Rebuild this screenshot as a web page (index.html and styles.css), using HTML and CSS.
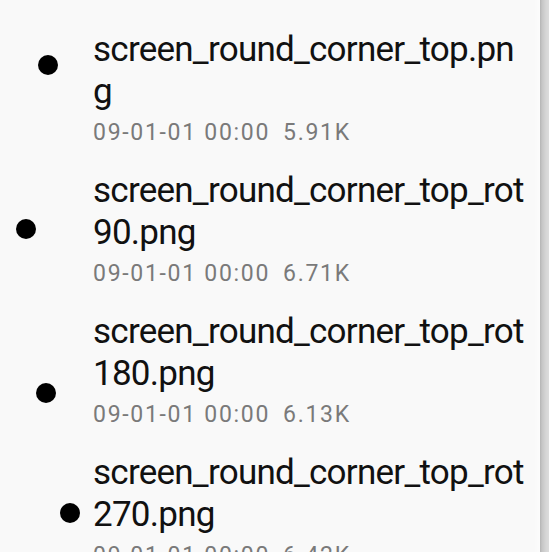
FILE: index.html
```html
<!DOCTYPE html>
<html lang="en">
<head>
<meta charset="utf-8">
<title>Files</title>
<link rel="stylesheet" href="styles.css">
</head>
<body>
<div class="screen">
  <main class="list">
    <div class="row">
      <span class="dot dot-1"></span>
      <div class="info">
        <div class="name">screen_round_corner_top.png</div>
        <div class="meta"><span class="date">09-01-01 00:00</span><span class="size">5.91K</span></div>
      </div>
    </div>
    <div class="row">
      <span class="dot dot-2"></span>
      <div class="info">
        <div class="name">screen_round_corner_top_rot90.png</div>
        <div class="meta"><span class="date">09-01-01 00:00</span><span class="size">6.71K</span></div>
      </div>
    </div>
    <div class="row">
      <span class="dot dot-3"></span>
      <div class="info">
        <div class="name">screen_round_corner_top_rot180.png</div>
        <div class="meta"><span class="date">09-01-01 00:00</span><span class="size">6.13K</span></div>
      </div>
    </div>
    <div class="row">
      <span class="dot dot-4"></span>
      <div class="info">
        <div class="name">screen_round_corner_top_rot270.png</div>
        <div class="meta"><span class="date">09-01-01 00:00</span><span class="size">6.42K</span></div>
      </div>
    </div>
  </main>
  <div class="edge"></div>
</div>
</body>
</html>
```
FILE: styles.css
```css
html, body {
  margin: 0;
  padding: 0;
  height: 100%;
  overflow: hidden;
}
body {
  background: #f9f9f9;
  font-family: Roboto, "Liberation Sans", sans-serif;
}
.screen {
  display: flex;
  height: 552px;
}
.list {
  flex: 1;
  padding-top: 18px;
  background: linear-gradient(to right, #f9f9f9 0, #f9f9f9 calc(100% - 6px), #fcfcfc 100%);
}
.edge {
  width: 9px;
  flex: none;
  background: linear-gradient(to right, #b4b4b4 0, #c6c6c6 2px, #d6d6d6 6px, #dcdcdc 100%);
}
.row {
  position: relative;
  display: flex;
  padding: 11px 0 11.5px 93px;
}
.dot {
  position: absolute;
  width: 20px;
  height: 20px;
  border-radius: 50%;
  background: #000;
}
.dot-1 { left: 37.5px; top: 37px; }
.dot-2 { left: 16px; top: 59.5px; }
.dot-3 { left: 36px; top: 83px; }
.dot-4 { left: 60px; top: 62px; }
.info {
  flex: 1;
  min-width: 0;
  padding-right: 14px;
}
.name {
  font-size: 35px;
  line-height: 42px;
  letter-spacing: -0.75px;
  color: #111;
  word-break: break-all;
}
.meta {
  margin-top: 4.5px;
  font-size: 23px;
  line-height: 30px;
  letter-spacing: 1.7px;
  color: #7a7a7a;
  white-space: nowrap;
}
.size {
  margin-left: 13px;
}
```
